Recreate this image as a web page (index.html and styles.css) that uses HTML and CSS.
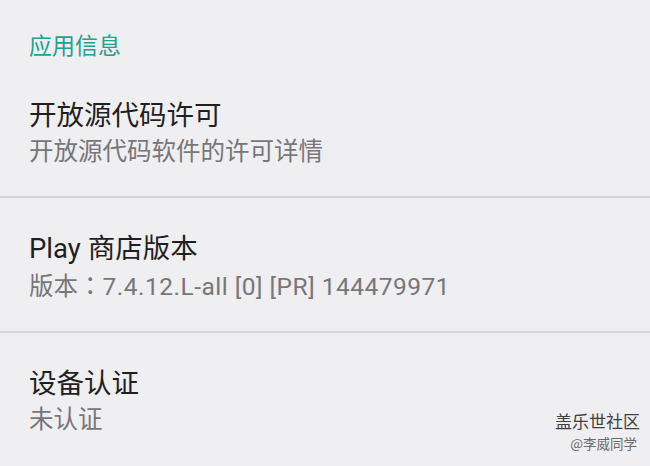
FILE: index.html
```html
<!DOCTYPE html>
<html lang="zh-CN">
<head>
<meta charset="utf-8">
<link rel="stylesheet" href="styles.css">
</head>
<body>
<div class="screen">
  <div class="section-header">应用信息</div>
  <div class="pref">
    <div class="pref-title">开放源代码许可</div>
    <div class="pref-summary">开放源代码软件的许可详情</div>
  </div>
  <div class="pref">
    <div class="pref-title">Play 商店版本</div>
    <div class="pref-summary">版本<span class="colon" lang="ja">：</span><span class="version">7.4.12.L-all [0] [PR] 144479971</span></div>
  </div>
  <div class="pref last">
    <div class="pref-title">设备认证</div>
    <div class="pref-summary">未认证</div>
  </div>
  <div class="watermark">
    <div class="wm-brand">盖乐世社区</div>
    <div class="wm-user">@李威同学</div>
  </div>
</div>
</body>
</html>
```
FILE: styles.css
```css
html, body {
  margin: 0;
  padding: 0;
  background: #efeef1;
}
.screen {
  position: relative;
  width: 650px;
  height: 466px;
  overflow: hidden;
  background: #efeef1;
  font-family: Roboto, "Noto Sans CJK SC", sans-serif;
}
.section-header {
  padding: 32px 0 0 29px;
  height: 33px;
  line-height: 30px;
  font-size: 23px;
  color: #23a08f;
  box-sizing: content-box;
}
.pref {
  padding: 33px 0 26px 29px;
  border-bottom: 2px solid #d5d4d7;
}
.pref.last {
  border-bottom: none;
}
.pref-title {
  font-size: 27.5px;
  line-height: 36px;
  color: #1f1f1f;
}
.pref-summary {
  font-size: 24.5px;
  line-height: 36px;
  color: #777678;
}
.colon {
  font-family: "Noto Sans CJK JP", sans-serif;
}
.version {
  letter-spacing: 0.5px;
}
.watermark {
  position: absolute;
  right: 10px;
  top: 410px;
  text-align: right;
  font-family: "Noto Sans CJK SC", sans-serif;
}
.wm-brand {
  font-size: 17px;
  line-height: 22px;
  color: #404040;
  font-weight: 400;
}
.wm-user {
  font-size: 13.5px;
  line-height: 22px;
  color: #6a6a6a;
  margin-right: 3px;
}
```
